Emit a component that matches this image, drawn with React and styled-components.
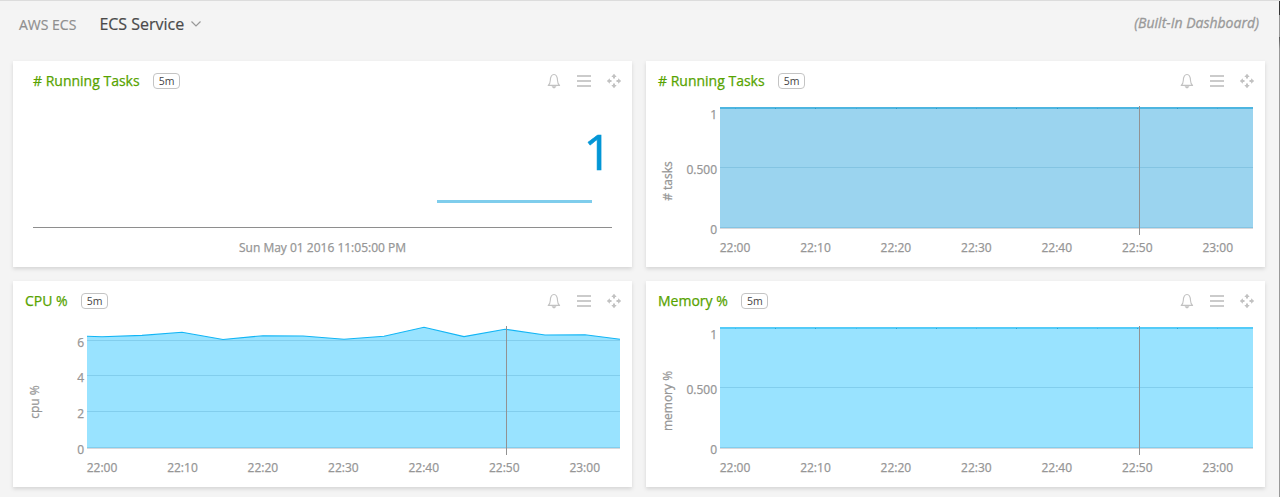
import React from "react";
import styled, { createGlobalStyle } from "styled-components";

const Global = createGlobalStyle`
  * { box-sizing: border-box; }
  body { margin: 0; background: #f4f4f4; font-family: "Open Sans", "Noto Sans", sans-serif; overflow: hidden; }
`;

const Page = styled.div`
  height: 497px;
  border-top: 1px solid #dcdcdc;
  background: #f4f4f4;
  display: grid;
  grid-template-columns: 1fr 1px;
`;

const Main = styled.main`
  display: flex;
  flex-direction: column;
`;

const Edge = styled.div`
  background: linear-gradient(#333 0 14px, #999 14px 36px, #555 36px, #999 48px);
`;

const TopBar = styled.header`
  height: 60px;
  padding: 0 20px 0 19px;
  display: flex;
  align-items: flex-start;
`;

const Crumb = styled.span`
  font-size: 14px;
  line-height: 20px;
  margin-top: 14px;
  color: #8f8f8f;
  -webkit-text-stroke: 0.2px #8f8f8f;
`;

const Current = styled.button`
  display: flex;
  align-items: center;
  gap: 7px;
  margin: 12px 0 0 23px;
  padding: 0;
  border: 0;
  background: none;
  font: 16px/22px "Open Sans", sans-serif;
  color: #4a4a4a;
  -webkit-text-stroke: 0.2px #4a4a4a;
`;

const Note = styled.span`
  margin: 12px 0 0 auto;
  font-size: 14px;
  line-height: 20px;
  font-style: italic;
  color: #999;
  -webkit-text-stroke: 0.3px #999;
`;

const Grid = styled.section`
  display: grid;
  grid-template-columns: 619px 619px;
  grid-auto-rows: 206px;
  gap: 14px;
  padding-left: 13px;
`;

const Card = styled.article`
  background: #fff;
  box-shadow: 0 2px 4px rgba(0, 0, 0, 0.13);
  display: flex;
  flex-direction: column;
`;

const CardHead = styled.div`
  height: 40px;
  padding: 0 10px 0 ${(p) => p.$inset}px;
  display: flex;
  align-items: center;
`;

const Title = styled.h2`
  margin: 0;
  font-size: 14px;
  line-height: 20px;
  font-weight: 400;
  color: #57a300;
  -webkit-text-stroke: 0.25px #57a300;
`;

const Badge = styled.span`
  margin-left: 13px;
  width: 27px;
  height: 16px;
  border: 1px solid #c4c4c4;
  border-radius: 4px;
  padding-left: 1px;
  font-size: 10.5px;
  line-height: 15px;
  text-align: center;
  color: #444;
`;

const Actions = styled.div`
  margin-left: auto;
  display: flex;
  align-items: center;
  gap: 14px;
`;

const Icon = styled.svg`
  display: block;
  width: 16px;
  height: 16px;
  overflow: visible;
`;

const Plot = styled.svg`
  display: block;
  width: 619px;
  height: 166px;
  overflow: visible;
  font-family: "Open Sans", sans-serif;
  font-size: 12px;
  fill: #969696;

  text {
    stroke: #969696;
    stroke-width: 0.25px;
  }
`;

const Single = styled.div`
  flex: 1;
  padding: 0 20px;
  display: flex;
  flex-direction: column;
`;

const Reading = styled.div`
  height: 127px;
  padding: 16px 0 0;
  border-bottom: 1px solid #8e8e8e;
  display: flex;
  flex-direction: column;
  align-items: flex-end;
`;

const Value = styled.div`
  height: 83px;
  font-size: 50px;
  line-height: 68px;
  color: #0396d6;
  -webkit-text-stroke: 0.6px #0396d6;
`;

const Spark = styled.div`
  width: 155px;
  height: 3px;
  margin: 0 20px 0 0;
  background: #7fcdec;
`;

const Stamp = styled.div`
  padding-top: 11px;
  text-align: center;
  font-size: 12px;
  line-height: 18px;
  color: #969696;
  -webkit-text-stroke: 0.25px #969696;
`;

function Bell() {
  return (
    <Icon viewBox="0 0 16 16" fill="none" stroke="#c2c2c2">
      <path d="M2.2 12.4c1.5-1.1 2-2.2 2.100-4.800C4.400 4 5.700 1.500 8 1.500s3.400 2.500 3.500 6.100c.1 2.600.6 3.700 2.100 4.800z" strokeWidth="1.1" strokeLinejoin="round" />
      <path d="M5.500 13.200h5L8.900 15.200H7.100z" fill="#c2c2c2" stroke="none" />
    </Icon>
  );
}

function Menu() {
  return (
    <Icon viewBox="0 0 16 16" fill="#cbcbcb">
      <path d="M1 2h14v2H1zM1 7h14v2H1zM1 12h14v2H1z" />
    </Icon>
  );
}

function Move() {
  return (
    <Icon viewBox="0 0 16 16" fill="#c2c2c2">
      <path d="M8 .8l2.700 3.100H9v1.600H7V3.900H5.300zM8 15.200l2.700-3.100H9v-1.600H7v1.600H5.300zM.8 8l3.100-2.700V7h1.600v2H3.900v1.700zM15.200 8l-3.100-2.700V7h-1.600v2h1.600v1.700z" />
    </Icon>
  );
}

function Head({ title, inset = 12 }) {
  return (
    <CardHead $inset={inset}>
      <Title>{title}</Title>
      <Badge>5m</Badge>
      <Actions>
        <Bell />
        <Menu />
        <Move />
      </Actions>
    </CardHead>
  );
}

const TIMES = ["22:00", "22:10", "22:20", "22:30", "22:40", "22:50", "23:00"];

/* Plot coordinates start at the lower edge of the card head. */
function Chart({ left, fill, line, unit, unitY, labels, gridY, points, cursor, flat }) {
  const right = left + 533;
  const coords = points.map(([x, y]) => `${x},${y}`).join(" ");
  return (
    <Plot viewBox="0 0 619 166">
      <polygon points={`${left},127 ${coords} ${right},127`} fill={fill} />
      {gridY.map((y) => (
        <rect key={y} x={left} y={y} width="533" height="1" fill="#4f9fc4" fillOpacity="0.3" />
      ))}
      <rect x={left} y="127" width="533" height="1" fill="#d8d8dc" />
      {flat ? (
        <>
          <rect x={left} y="6" width="533" height="2" fill={line} />
          {Array.from({ length: 13 }, (_, i) => (
            <rect key={i} x={Math.round(left + 15 + i * 40.2)} y="7" width="1" height="1" fill="#1689b8" fillOpacity={i % 3 ? 0.6 : 0.25} />
          ))}
        </>
      ) : (
        <polyline points={coords} fill="none" stroke={line} strokeWidth="1.1" />
      )}
      <rect x={cursor} y="5" width="1" height="129" fill="#929292" />
      {labels.map(([text, y]) => (
        <text key={text} x={left - 3} y={y} textAnchor="end">{text}</text>
      ))}
      {TIMES.map((t, i) => (
        <text key={t} x={left + 15 + i * 80.45} y="151" textAnchor="middle">{t}</text>
      ))}
      <text transform={`translate(25.5 ${unitY}) rotate(-90)`} textAnchor="middle">{unit}</text>
    </Plot>
  );
}

const CPU = [
  [74, 15.3], [89, 15.7], [129, 14.4], [169, 11.3], [210, 18.5], [250, 14.7], [290, 15], [331, 18.2],
  [371, 15.2], [411, 6.2], [451, 15.6], [492, 8.2], [532, 14], [572, 13.7], [607, 18.2],
];
const FLAT = [[74, 6], [607, 6]];
const UNIT_LABELS = [["1", 18], ["0.500", 73], ["0", 133]];

export default function App() {
  return (
    <Page>
      <Global />
      <Main>
        <TopBar>
          <Crumb>AWS ECS</Crumb>
          <Current>
            ECS Service
            <svg width="10" height="6" viewBox="0 0 10 6" fill="none" stroke="#999" strokeWidth="1.2">
              <path d="M.5.5L5 5 9.500.5" />
            </svg>
          </Current>
          <Note>(Built-In Dashboard)</Note>
        </TopBar>
        <Grid>
          <Card>
            <Head title="# Running Tasks" inset={20} />
            <Single>
              <Reading>
                <Value>1</Value>
                <Spark />
              </Reading>
              <Stamp>Sun May 01 2016 11:05:00 PM</Stamp>
            </Single>
          </Card>
          <Card>
            <Head title="# Running Tasks" />
            <Chart left={74} fill="#9bd4ef" line="#4db5e0" unit="# tasks" unitY={80} labels={UNIT_LABELS} gridY={[66, 126]} points={FLAT} cursor={493} flat />
          </Card>
          <Card>
            <Head title="CPU %" />
            <Chart left={74} fill="#99e3ff" line="#12b5f5" unit="cpu %" unitY={81} labels={[["6", 26], ["4", 61], ["2", 97], ["0", 133]]} gridY={[19, 54, 90, 126]} points={CPU} cursor={493} />
          </Card>
          <Card>
            <Head title="Memory %" />
            <Chart left={74} fill="#99e3ff" line="#53cbf8" unit="memory %" unitY={80} labels={UNIT_LABELS} gridY={[66, 126]} points={FLAT} cursor={493} flat />
          </Card>
        </Grid>
      </Main>
      <Edge />
    </Page>
  );
}
